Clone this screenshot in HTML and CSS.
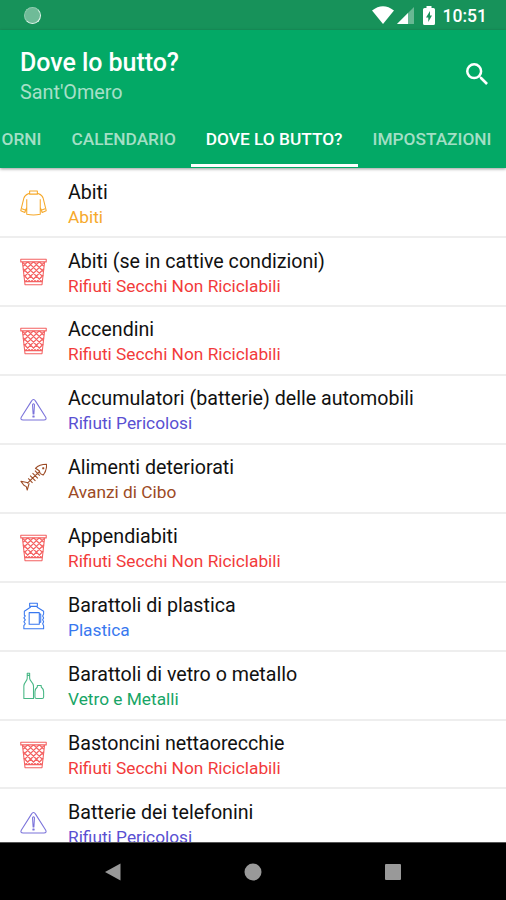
FILE: index.html
```
<!DOCTYPE html>
<html lang="it">
<head>
<meta charset="utf-8">
<title>Dove lo butto?</title>
<link rel="stylesheet" href="styles.css">
</head>
<body>
<svg class="defs" aria-hidden="true">
  <defs>
    <symbol id="shirt" viewBox="0 0 28 28">
      <path d="M10 1.5H18V4.8H10ZM10 3.8C7 5 5 5 4 9L.8 22L5 23.8L7 18.5M18 3.8C21 5 23 5 24 9L27.2 22L23 23.8L21 18.5M7 10V25.7Q14 27.2 21 25.7V10M2 20L6 21.5M26 20L22 21.5"/>
    </symbol>
    <symbol id="basket" viewBox="0 0 28 28">
      <path d="M.8 .8H27.2V3.5H.8ZM2.5 3.5L5.2 27.2H22.8L25.5 3.5M4.8 24H23.2"/>
      <path class="mesh" d="M3.3 8L7.8 3.5M4 13.3L13.8 3.5M4.5 18.8L19.8 3.5M5.3 24L25 4.3M11.3 24L24.7 10.6M17.3 24L24 17.3M24.7 8L20.2 3.5M24 13.3L14.2 3.5M23.5 18.8L8.2 3.5M22.7 24L3 4.3M16.7 24L3.3 10.6M10.7 24L4 17.3"/>
    </symbol>
    <symbol id="warning" viewBox="0 0 28 28">
      <path d="M11.9 4.8Q14 1.5 16.1 4.8L26.7 21.5Q28 24.4 24.8 24.4H3.2Q0 24.4 1.3 21.5ZM13 8.5Q14 6.5 15 8.5L14.4 18H13.6ZM13.4 20.3H14.6V21.3H13.4Z"/>
    </symbol>
    <symbol id="fish" viewBox="0 0 28 28">
      <path d="M16 5Q20 .8 27.5 .8Q28 7 24 12L21 10.5L20 7.5ZM20 8.5L7.5 20.5M8.5 20L1 18.5L4 22.5L6.5 24L7.5 27.5L9.5 20.5M15.5 7.5L20.5 12.5M13 10L18.5 15.5M10.5 12.5L16 18M8.5 15.5L13 20M23.6 4.4H24.6V5.4H23.6Z"/>
    </symbol>
    <symbol id="jug" viewBox="0 0 28 28">
      <path d="M10 .8H18V4H10ZM10.8 4V5L4.5 9V13L5.5 14L4 16L5.5 18L4 20L5.5 22L4 24V27.2H24.5V24L23.5 22L24.5 20L23.5 18L24.5 16L23.5 14L24.5 12V9L17.8 5V4M9.5 10.5H20V22.5H9.5ZM20 12H21.5V20.5H20"/>
    </symbol>
    <symbol id="bottles" viewBox="0 0 28 28">
      <path d="M7.5 .8H10V6C10 9 14 10 14 14V27H4V14C4 10 7.5 9 7.5 6ZM7.5 3H10M18 13.5H22V15C24 16.5 24.5 18 24.5 20V25.5Q24.5 27 23 27H17Q15.5 27 15.5 25.5V20C15.5 18 16 16.5 18 15Z"/>
    </symbol>
  </defs>
</svg>
<div class="screen">
  <div class="statusbar">
    <span class="sync"></span>
    <svg class="wifi" viewBox="0 0 22 18"><path d="M0 4.5Q11-4.2 22 4.5L11 18Z"/></svg>
    <svg class="signal" viewBox="0 0 17 17"><path d="M0 17L17 0V17Z" opacity=".35"/><path d="M0 17L11 6V17Z"/></svg>
    <svg class="battery" viewBox="0 0 12 19"><path fill-rule="evenodd" d="M3.5 0H8.5V2H10.5Q12 2 12 3.5V17.5Q12 19 10.5 19H1.5Q0 19 0 17.5V3.5Q0 2 1.5 2H3.5ZM7 5L3 11.5H5.3V16L9 9.5H7Z"/></svg>
    <span class="clock">10:51</span>
  </div>
  <header class="appbar">
    <div class="heading">
      <div>
        <h1>Dove lo butto?</h1>
        <p>Sant'Omero</p>
      </div>
      <svg class="search" viewBox="3 3 17.5 17.5"><path d="M15.5 14h-.79l-.28-.27A6.47 6.47 0 0 0 16 9.5 6.5 6.5 0 1 0 9.5 16c1.61 0 3.09-.59 4.23-1.57l.27.28v.79l5 4.99L20.49 19l-4.99-5zm-6 0a4.5 4.5 0 1 1 0-9 4.5 4.5 0 0 1 0 9z"/></svg>
    </div>
    <nav class="tabs">
      <span class="tab first">ORNI</span>
      <span class="tab">CALENDARIO</span>
      <span class="tab active">DOVE LO BUTTO?</span>
      <span class="tab">IMPOSTAZIONI</span>
    </nav>
  </header>
  <main class="list">
    <div class="row clothes"><svg><use href="#shirt"/></svg><div><h2>Abiti</h2><p>Abiti</p></div></div>
    <div class="row dry"><svg><use href="#basket"/></svg><div><h2>Abiti (se in cattive condizioni)</h2><p>Rifiuti Secchi Non Riciclabili</p></div></div>
    <div class="row dry"><svg><use href="#basket"/></svg><div><h2>Accendini</h2><p>Rifiuti Secchi Non Riciclabili</p></div></div>
    <div class="row hazard"><svg><use href="#warning"/></svg><div><h2>Accumulatori (batterie) delle automobili</h2><p>Rifiuti Pericolosi</p></div></div>
    <div class="row food"><svg><use href="#fish"/></svg><div><h2>Alimenti deteriorati</h2><p>Avanzi di Cibo</p></div></div>
    <div class="row dry"><svg><use href="#basket"/></svg><div><h2>Appendiabiti</h2><p>Rifiuti Secchi Non Riciclabili</p></div></div>
    <div class="row plastic"><svg><use href="#jug"/></svg><div><h2>Barattoli di plastica</h2><p>Plastica</p></div></div>
    <div class="row glass"><svg><use href="#bottles"/></svg><div><h2>Barattoli di vetro o metallo</h2><p>Vetro e Metalli</p></div></div>
    <div class="row dry"><svg><use href="#basket"/></svg><div><h2>Bastoncini nettaorecchie</h2><p>Rifiuti Secchi Non Riciclabili</p></div></div>
    <div class="row hazard"><svg><use href="#warning"/></svg><div><h2>Batterie dei telefonini</h2><p>Rifiuti Pericolosi</p></div></div>
  </main>
  <footer class="navbar">
    <svg viewBox="0 0 18 18"><path d="M1 9L16.5 .5V17.5Z"/></svg>
    <svg viewBox="0 0 18 18"><circle cx="9" cy="9" r="8.5"/></svg>
    <svg viewBox="0 0 18 18"><rect x="1" y="1" width="16" height="16" rx="1"/></svg>
  </footer>
</div>
</body>
</html>
```
FILE: styles.css
```
* { box-sizing: border-box; }
body, h1, h2, p { margin: 0; font-weight: 400; }
body { font-family: Roboto, sans-serif; background: #fff; }
.defs { position: absolute; width: 0; height: 0; }
.screen { width: 506px; height: 900px; display: flex; flex-direction: column; overflow: hidden; }
.statusbar { height: 30px; flex: none; background: #17925a; display: flex; align-items: center; padding: 0 19px 0 24px; color: #fff; }
.statusbar svg { fill: #fff; flex: none; }
.sync { width: 17px; height: 17px; border-radius: 50%; background: #6fbb98; border: 1px solid #8fcbae; border-right-color: #e2f4eb; border-bottom-color: #e2f4eb; margin-right: auto; }
.wifi { width: 22px; height: 18px; }
.signal { width: 17px; height: 17px; margin-left: 3px; }
.battery { width: 12px; height: 19px; margin-left: 9px; }
.clock { font-size: 17.5px; font-weight: 500; margin-left: 8px; line-height: 28px; padding-top: 2px; }
.appbar { height: 138px; flex: none; background: #03a966; color: #fff; position: relative; box-shadow: 0 1px 3px rgba(0,0,0,.4); }
.heading { display: flex; justify-content: space-between; height: 80px; padding: 18px 18px 0 20px; }
h1 { font-size: 25px; font-weight: 500; line-height: 29px; letter-spacing: -.05px; }
.heading p { font-size: 19.8px; line-height: 24px; margin-top: 4px; color: #a7e0c8; }
.search { width: 22px; height: 22px; margin-top: 15px; fill: #fff; }
.tabs { display: flex; height: 58px; }
.tab { flex: none; padding: 0 15px; font-size: 17.3px; font-weight: 500; line-height: 58px; color: #a3dfc5; white-space: nowrap; }
.tab.first { padding-left: 1.5px; }
.tab.active { color: #fff; height: 57px; border-bottom: 3px solid #fff; }
.list { height: 674px; flex: none; overflow: hidden; padding-top: 1px; }
.row { height: 68.95px; display: flex; padding: 0 20px; border-bottom: 2px solid #eee; }
.row > svg { width: 27px; height: 28px; flex: none; margin: 20px 21px 0 0; fill: none; stroke: currentColor; stroke-width: 1.1; stroke-linejoin: round; }
.row.food > svg { margin-top: 18px; }
.row.plastic > svg { margin-top: 19px; }
.mesh { stroke-width: 1.4; }
.row > div { padding-top: 11.6px; }
h2 { font-size: 19.65px; line-height: 24px; color: #111; white-space: nowrap; }
.row p { font-size: 17.3px; line-height: 22px; margin-top: 1px; white-space: nowrap; }
.clothes { color: #f6a92b; }
.dry { color: #f23b3b; }
.hazard { color: #5a50d2; }
.food { color: #9c4a24; }
.plastic { color: #3978ef; }
.glass { color: #18a566; }
.dry > svg, .hazard > svg, .glass > svg { opacity: .8; }
.navbar { flex: 1; background: #000; border-top: 1px solid #555; display: flex; justify-content: space-between; padding: 20px 104px 0; }
.navbar svg { width: 18px; height: 18px; fill: #999; }
```
